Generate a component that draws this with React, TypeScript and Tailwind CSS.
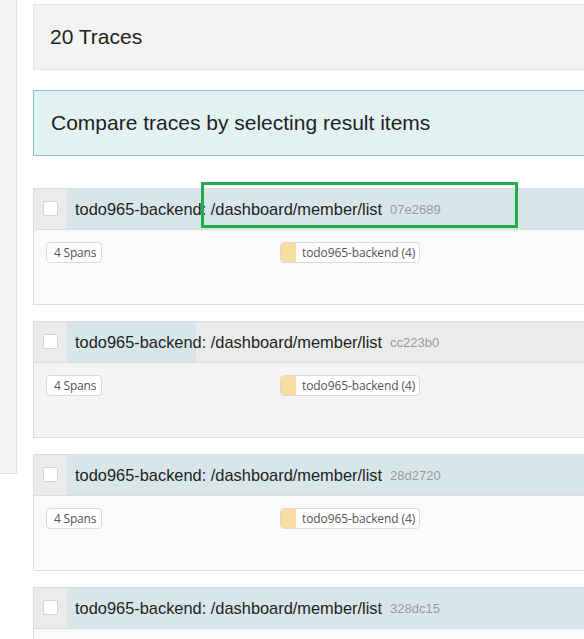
import React from 'react';

interface Trace {
  id: string;
  barWidth: string;
  headerBg: string;
  bodyBg: string;
}

const traces: Trace[] = [
  { id: '07e2689', barWidth: 'w-full', headerBg: 'bg-[#ebebeb]', bodyBg: 'bg-[#fafafa]' },
  { id: 'cc223b0', barWidth: 'w-[129px]', headerBg: 'bg-[#ebebeb]', bodyBg: 'bg-[#f4f4f4]' },
  { id: '28d2720', barWidth: 'w-full', headerBg: 'bg-[#ebebeb]', bodyBg: 'bg-[#fafafa]' },
  { id: '328dc15', barWidth: 'w-full', headerBg: 'bg-[#ebebeb]', bodyBg: 'bg-[#fafafa]' },
];

function TraceItem({ trace }: { trace: Trace }): JSX.Element {
  return (
    <div className="h-[117px] shrink-0 border border-[#dcdcdc] flex flex-col">
      <div className="h-[41px] shrink-0 flex border-b border-[#dcdcdc]">
        <div className="w-[33px] shrink-0 bg-[#ebebeb] flex items-center pl-[9px]">
          <div className="w-[15px] h-[15px] bg-white border border-[#d4d4d4] rounded-[2px] -mt-[1px]" />
        </div>
        <div className={`relative flex-1 ${trace.headerBg}`}>
          <div className={`absolute left-0 top-0 bottom-0 bg-[#d8e6ea] ${trace.barWidth}`} />
          <div className="relative h-full flex items-center pl-[8px]">
            <span className="text-[16.4px] text-[#222]">todo965-backend: /dashboard/member/list</span>
            <span className="ml-[8px] text-[13px] text-[#999] mt-[1px]">{trace.id}</span>
          </div>
        </div>
      </div>
      <div className={`flex-1 ${trace.bodyBg} px-[12px] pt-[12px] flex items-start text-[12px] font-['Open_Sans',sans-serif]`}>
        <div className="w-[234px] shrink-0">
          <span className="inline-flex items-center h-[21px] pl-[7px] pr-[5px] bg-white border border-[#d9d9d9] rounded-[4px] text-[#555] tracking-[-0.2px]">
            4 Spans
          </span>
        </div>
        <span className="inline-flex items-stretch h-[21px] bg-white border border-[#d9d9d9] rounded-[4px] overflow-hidden text-[#555]">
          <span className="w-[15px] bg-[#f8dca0]" />
          <span className="flex items-center pl-[6px] pr-[4px] tracking-[-0.1px]">todo965-backend (4)</span>
        </span>
      </div>
    </div>
  );
}

export default function App(): JSX.Element {
  return (
    <div className="relative w-[584px] h-[639px] overflow-hidden bg-white flex font-['Liberation_Sans',Arial,sans-serif]">
      <div className="w-[17px] h-[474px] shrink-0 bg-[#f3f3f3] border-r border-b border-[#e2e2e2]" />
      <div className="w-[640px] shrink-0 pl-[16px] pt-[4px] flex flex-col">
        <div className="h-[66px] shrink-0 border border-[#e4e4e4] bg-[#f3f3f3] flex items-center pl-[16px] text-[21px] text-[#222]">
          20 Traces
        </div>
        <div className="h-[66px] shrink-0 mt-[20px] border border-[#84c6c2] bg-[#e3f1f1] flex items-center pl-[17px] text-[21px] text-[#222]">
          Compare traces by selecting result items
        </div>
        <div className="mt-[32px] flex flex-col gap-[16px]">
          {traces.map((t) => (
            <TraceItem key={t.id} trace={t} />
          ))}
        </div>
      </div>
      <div className="absolute left-[201px] top-[182px] w-[317px] h-[46px] border-[3px] border-[#22ad4c] pointer-events-none" />
    </div>
  );
}
